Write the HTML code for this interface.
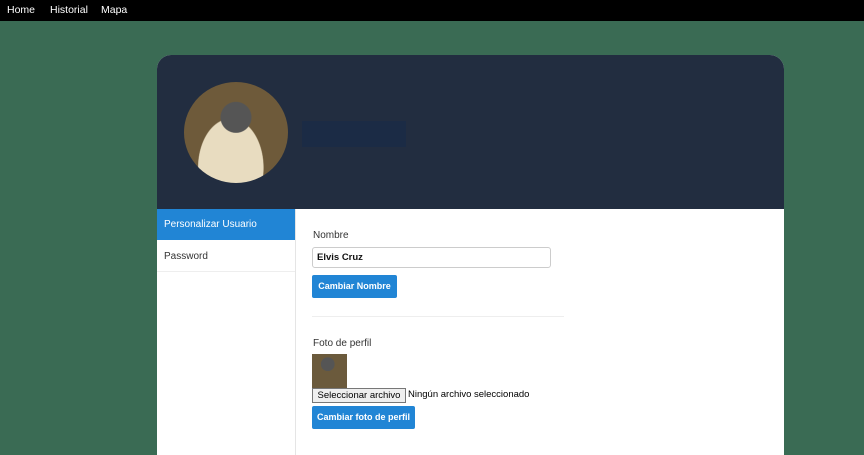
<!DOCTYPE html>
<html><head><style>
body{margin:0;width:864px;height:437px;overflow:hidden;background:#3a6b54;font-family:"Liberation Sans",Arial,sans-serif;font-size:10px;position:relative}
.nav{position:absolute;left:0;top:0;width:864px;height:21px;background:#000;color:#fff}
.nav span{position:absolute;top:4px;font-size:10.5px}
.card{position:absolute;left:157px;top:55px;width:627px;height:400px;background:#fff;border-radius:14px 14px 0 0;overflow:hidden}
.hdr{position:absolute;left:0;top:0;width:627px;height:154px;background:#222d40}
.av{position:absolute;left:27px;top:27px;width:104px;height:101px;border-radius:50%;background:radial-gradient(circle at 50% 35%,#555 0 18%,transparent 19%),radial-gradient(ellipse at 45% 85%,#e8dcc0 0 40%,transparent 41%),#6e5a3a;overflow:hidden}
.bx{position:absolute;left:145px;top:66px;width:104px;height:26px;background:#1b2b45}
.side{position:absolute;left:0;top:154px;width:138px;height:250px;border-right:1px solid #e5e5e5}
.act{height:31px;background:#2185d5;color:#fff;line-height:32px;padding-left:7px}
.pw{height:31px;border-bottom:1px solid #eee;line-height:33px;padding-left:7px;color:#333}
.t{position:absolute;color:#333;white-space:nowrap}
.in{position:absolute;left:155px;top:192px;width:233px;height:19px;border:1px solid #ccc;border-radius:3px;font-weight:bold;font-size:9.5px;line-height:19px;padding-left:4px;color:#111}
.btn{position:absolute;background:#2185d5;color:#fff;font-weight:bold;font-size:9px;border-radius:2px;text-align:center;white-space:nowrap}
</style></head><body>
<div class="nav"><span style="left:7px">Home</span><span style="left:50px">Historial</span><span style="left:101px">Mapa</span></div>
<div class="card">
<div class="hdr"><div class="av"></div><div class="bx"></div></div>
<div class="side"><div class="act">Personalizar Usuario</div><div class="pw">Password</div></div>
<div class="t" style="left:156px;top:175px">Nombre</div>
<div class="in">Elvis Cruz</div>
<div class="btn" style="left:155px;top:220px;width:85px;height:23px;line-height:23px">Cambiar Nombre</div>
<div style="position:absolute;left:155px;top:261px;width:252px;border-top:1px solid #eee"></div>
<div class="t" style="left:156px;top:283px">Foto de perfil</div>
<div style="position:absolute;left:155px;top:299px;width:35px;height:34px;background:radial-gradient(circle at 45% 30%,#555 0 22%,transparent 23%),#6b5a3c"></div>
<div style="position:absolute;left:155px;top:333px;width:92px;height:13px;border:1px solid #777;background:#efefef;font-size:9.5px;line-height:13px;text-align:center;color:#000;white-space:nowrap">Seleccionar archivo</div>
<div class="t" style="left:251px;top:334px;font-size:9.5px;color:#000">Ningún archivo seleccionado</div>
<div class="btn" style="left:155px;top:351px;width:103px;height:23px;line-height:23px">Cambiar foto de perfil</div>
</div>
</body></html>
